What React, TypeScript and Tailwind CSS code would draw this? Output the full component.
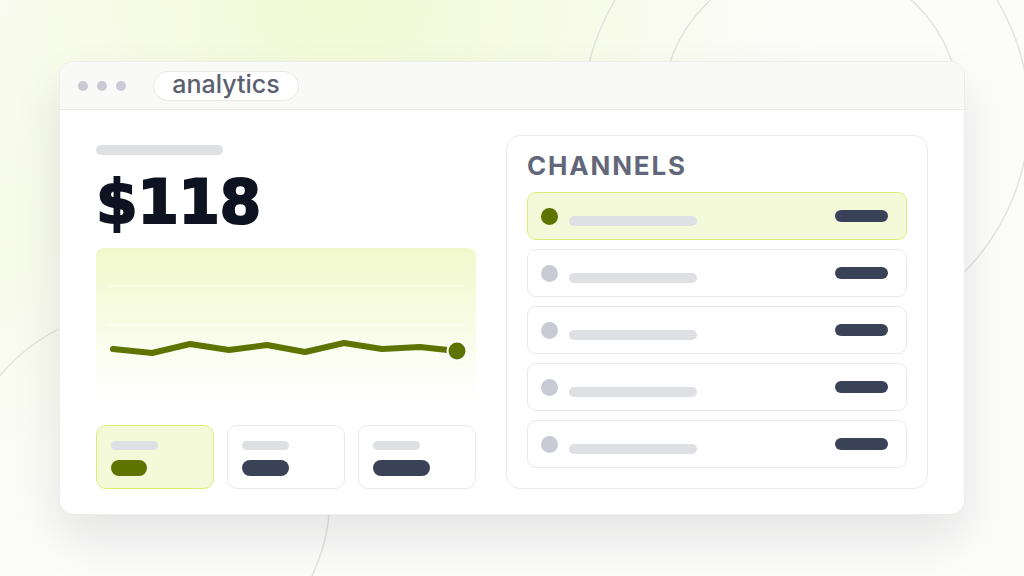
import React from "react";

const points: [number, number][] = [
  [17, 101],
  [56, 105],
  [94, 96],
  [133, 102],
  [171, 97],
  [209, 104],
  [248, 95],
  [286, 101],
  [324, 99],
  [361, 103],
];

function Chart() {
  const d = points.map((p, i) => `${i === 0 ? "M" : "L"}${p[0]} ${p[1]}`).join(" ");
  return (
    <div className="mt-[16px] h-[152px] w-[380px] rounded-[8px] bg-linear-to-b from-[#f1f9cb] to-[#ffffff]">
      <svg width="380" height="152" viewBox="0 0 380 152">
        <line x1="12" y1="38" x2="368" y2="38" stroke="#ffffff" strokeOpacity="0.8" strokeWidth="1" />
        <line x1="12" y1="77" x2="368" y2="77" stroke="#ffffff" strokeOpacity="0.8" strokeWidth="1" />
        <path d={d} fill="none" stroke="#5f7300" strokeWidth="6" strokeLinecap="round" strokeLinejoin="round" />
        <circle cx="361" cy="103" r="9.5" fill="#5f7300" stroke="#ffffff" strokeWidth="2" />
      </svg>
    </div>
  );
}

function StatCard({ active, pillW }: { active?: boolean; pillW: string }) {
  return (
    <div
      className={
        active
          ? "h-[64px] w-[118px] rounded-[10px] border-[1.5px] border-[#dbef78] bg-[#f3f9d9] pl-[14px] pt-[15px]"
          : "h-[64px] w-[118px] rounded-[10px] border-[1.5px] border-[#e9e9e6] bg-white pl-[14px] pt-[15px]"
      }
    >
      <div className="h-[9px] w-[47px] rounded-full bg-[#dfe0e4]" />
      <div className={`mt-[10px] h-[16px] rounded-full ${active ? "bg-[#5f7300]" : "bg-[#3a4257]"} ${pillW}`} />
    </div>
  );
}

function Row({ active }: { active?: boolean }) {
  return (
    <div
      className={
        active
          ? "flex h-[48px] items-center rounded-[9px] border-[1.5px] border-[#dbef78] bg-[#f3f9d9] pl-[13px] pr-[18px]"
          : "flex h-[48px] items-center rounded-[9px] border-[1.5px] border-[#e9e9e6] bg-white pl-[13px] pr-[18px]"
      }
    >
      <div className={`h-[17px] w-[17px] rounded-full ${active ? "bg-[#5f7300]" : "bg-[#c9cbd4]"}`} />
      <div className="ml-[11px] mt-[10px] h-[10px] w-[128px] rounded-full bg-[#dfe0e4]" />
      <div className="ml-auto h-[12px] w-[53px] rounded-full bg-[#3a4257]" />
    </div>
  );
}

export default function App() {
  return (
    <div className="relative h-[576px] w-[1024px] overflow-hidden bg-[#fcfcfb]">
      <div className="absolute inset-0 bg-[radial-gradient(ellipse_480px_300px_at_340px_10px,#f2fad4,rgba(252,252,251,0))]" />
      <div className="absolute inset-0 bg-[radial-gradient(ellipse_260px_320px_at_0px_240px,#f7fbe8,rgba(252,252,251,0))]" />
      <svg className="absolute inset-0" width="1024" height="576" viewBox="0 0 1024 576">
        <circle cx="806" cy="115" r="223" fill="none" stroke="#e3e3df" strokeWidth="1.5" />
        <circle cx="811" cy="110" r="149" fill="none" stroke="#e3e3df" strokeWidth="1.5" />
        <circle cx="143" cy="496" r="187" fill="none" stroke="#e3e3df" strokeWidth="1.5" />
      </svg>

      <div className="relative pl-[60px] pt-[62px]">
        <div className="h-[452px] w-[904px] overflow-hidden rounded-[14px] bg-white shadow-[0_0_0_1px_#ededea,0_24px_50px_rgba(20,20,30,0.1)]">
          <div className="flex h-[48px] items-center border-b border-[#ebebe8] bg-[#f9f9f7] pl-[18px]">
            <div className="flex gap-[9px]">
              <div className="h-[10px] w-[10px] rounded-full bg-[#c9cad3]" />
              <div className="h-[10px] w-[10px] rounded-full bg-[#c9cad3]" />
              <div className="h-[10px] w-[10px] rounded-full bg-[#c9cad3]" />
            </div>
            <div className="ml-[27px] flex h-[30px] w-[146px] items-center justify-center rounded-full border-[1.5px] border-[#e6e6e2] bg-white font-['Inter',sans-serif] text-[25px] font-medium leading-none text-[#5b6070]">
              <span className="-mt-[2px]">analytics</span>
            </div>
          </div>

          <div className="flex h-[404px] gap-[30px] px-[36px] py-[25px]">
            <div className="flex w-[380px] flex-col">
              <div className="mt-[10px] h-[10px] w-[127px] rounded-full bg-[#dfe0e4]" />
              <div className="mt-[17px] h-[60px] font-['DejaVu_Sans',sans-serif] text-[60px] font-bold leading-none tracking-[-0.01em] text-[#0d1321] [-webkit-text-stroke:2px_#0d1321]">
                $118
              </div>
              <Chart />
              <div className="mt-[25px] flex gap-[13px]">
                <StatCard active pillW="w-[36px]" />
                <StatCard pillW="w-[47px]" />
                <StatCard pillW="w-[57px]" />
              </div>
            </div>

            <div className="h-[354px] w-[422px] rounded-[14px] border border-[#ebebe8] px-[20px] pt-[17px]">
              <div className="h-[26px] font-['Inter',sans-serif] text-[26px] font-bold leading-none tracking-[0.07em] text-[#62677a]">
                CHANNELS
              </div>
              <div className="mt-[13px] flex flex-col gap-[9px]">
                <Row active />
                <Row />
                <Row />
                <Row />
                <Row />
              </div>
            </div>
          </div>
        </div>
      </div>
    </div>
  );
}
